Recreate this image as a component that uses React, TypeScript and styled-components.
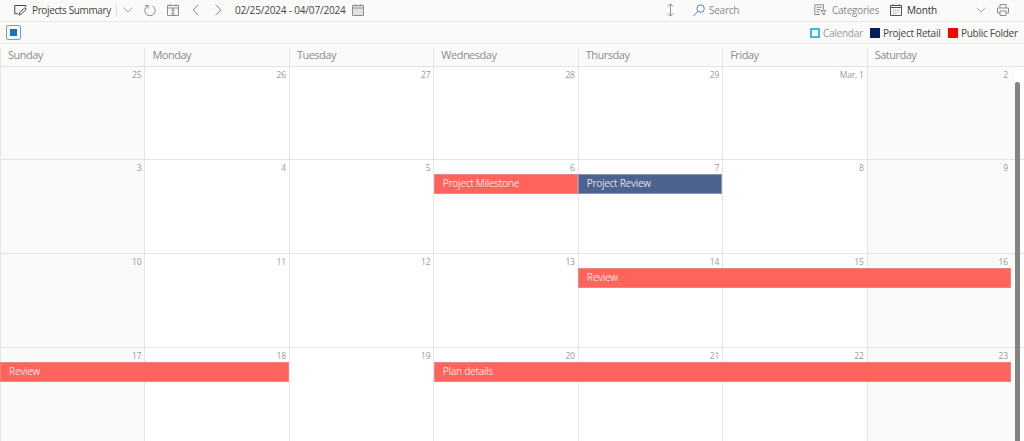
import type { ReactNode } from "react"
import styled, { createGlobalStyle } from "styled-components"

type EventItem = {
    title: string;
    start: number;
    span: number;
    color: string;
}

type WeekItem = {
    days: string[];
    events: EventItem[];
}

const RED = '#ff645c';
const NAVY = '#4d628f';

const dayNames = ['Sunday', 'Monday', 'Tuesday', 'Wednesday', 'Thursday', 'Friday', 'Saturday'];

const weeks: WeekItem[] = [
    { days: ['25', '26', '27', '28', '29', 'Mar, 1', '2'], events: [] },
    {
        days: ['3', '4', '5', '6', '7', '8', '9'],
        events: [
            { title: 'Project Milestone', start: 4, span: 1, color: RED },
            { title: 'Project Review', start: 5, span: 1, color: NAVY },
        ],
    },
    {
        days: ['10', '11', '12', '13', '14', '15', '16'],
        events: [{ title: 'Review', start: 5, span: 3, color: RED }],
    },
    {
        days: ['17', '18', '19', '20', '21', '22', '23'],
        events: [
            { title: 'Review', start: 1, span: 2, color: RED },
            { title: 'Plan details', start: 4, span: 4, color: RED },
        ],
    },
];

const legends = [
    { label: 'Calendar', color: '#35bde8', filled: false, width: 60 },
    { label: 'Project Retail', color: '#00205b', filled: true, width: 78 },
    { label: 'Public Folder', color: '#ff0000', filled: true, width: 70 },
];

type IconProps = { w: number; h: number; color?: string; children: ReactNode }

const Icon = ({ w, h, color = '#8c8c8c', children }: IconProps) => (
    <svg width={w} height={h} viewBox={`0 0 ${w} ${h}`} fill="none" stroke={color} strokeWidth="1">
        {children}
    </svg>
);

const Chevron = () => (
    <Icon w={10} h={6} color="#a5a5a5"><path d="M.8 .8 5 5 9.2 .8" /></Icon>
);

/**
 * Toolbar above the calendar
 */
const Toolbar = () => (
    <SToolbar>
        <SSlot w={18}>
            <Icon w={13} h={12} color="#444">
                <path d="M11.8 3.2V1.5H.8v8.2h3M5 11l.6-2.4 5.2-4.8 1.5 1.5L7.3 10z" />
            </Icon>
        </SSlot>
        <SSlot w={84}><SLabel spacing={-0.37} color="#444">Projects Summary</SLabel></SSlot>
        <SDivider />
        <SSlot w={21}><Chevron /></SSlot>
        <SSlot w={23}>
            <Icon w={12} h={13}>
                <path d="M3.6 1.9A5.2 5.2 0 1 0 8.4 1.9M1 1.6h3.2v3.2" />
            </Icon>
        </SSlot>
        <SSlot w={25}>
            <Icon w={12} h={12}>
                <path d="M.5 1.5h11v10H.5zM.5 4h11M3 0v2M9 0v2M6 4.8v5.6M4.3 6.3 6 4.7l1.7 1.6M4.3 9 6 10.6 7.7 9" />
            </Icon>
        </SSlot>
        <SSlot w={23}><Icon w={7} h={12}><path d="M6.4 .8 1 6l5.4 5.2" /></Icon></SSlot>
        <SSlot w={20}><Icon w={7} h={12}><path d="M.6 .8 6 6 .6 11.2" /></Icon></SSlot>
        <SSlot w={117}><SLabel spacing={-0.17} color="#444">02/25/2024 - 04/07/2024</SLabel></SSlot>
        <Icon w={12} h={12}>
            <path d="M.5 1.5h11v10H.5z" fill="#e2e2e2" />
            <path d="M.5 4h11M3 0v2M9 0v2" />
        </Icon>
        <SSpacer />
        <SSlot w={26}>
            <Icon w={7} h={14}><path d="M3.5 1v12M.8 3.6 3.5 .9l2.7 2.7M.8 10.4l2.7 2.7 2.7-2.7" /></Icon>
        </SSlot>
        <SSlot w={16}>
            <Icon w={12} h={13} color="#5585b5"><circle cx="7.6" cy="4.6" r="3.7" /><path d="M4.8 7.3.6 12" /></Icon>
        </SSlot>
        <SSlot w={105}><SLabel spacing={-0.25} color="#888">Search</SLabel></SSlot>
        <SSlot w={18}>
            <Icon w={13} h={12}>
                <path d="M6 10.5H.8V.8h8.7v4.7M2.5 3.3h5.3M2.5 5.6h4M2.5 7.9h3M7 6.5h5L10.2 8.7V11L8.8 10V8.7z" />
            </Icon>
        </SSlot>
        <SSlot w={58}><SLabel spacing={-0.25} color="#888">Categories</SLabel></SSlot>
        <SSlot w={17}>
            <Icon w={12} h={12} color="#555">
                <path d="M.5 1.5h11v10H.5zM.5 3.5h11M3 0v2M9 0v2" />
                <path d="M3 6h6.5M3 7.8h6.5M3 9.6h4" stroke="#aaa" strokeDasharray="1 .8" />
            </Icon>
        </SSlot>
        <SSlot w={69}><SLabel spacing={-0.15} color="#333">Month</SLabel></SSlot>
        <SSlot w={21}><Chevron /></SSlot>
        <Icon w={12} h={12}>
            <path d="M3 4V.5h6V4M3 9H.5V4h11v5H9M3 7h6v4.5H3z" />
        </Icon>
    </SToolbar>
);

const App = () => (
    <>
        <GlobalStyle />
        <SPage>
            <Toolbar />
            <SLegendBar>
                <SCheckbox />
                <SSpacer />
                {legends.map(({ label, color, filled, width }) => (
                    <SLegend key={label} w={width}>
                        <SSwatch color={color} filled={filled} />
                        <SLabel spacing={-0.27} color={filled ? '#444' : '#999'}>{label}</SLabel>
                    </SLegend>
                ))}
            </SLegendBar>
            <SDayHeader>
                {dayNames.map((name) => <SDayName key={name}>{name}</SDayName>)}
            </SDayHeader>
            <SCalendar>
                {weeks.map(({ days, events }) => (
                    <SWeek key={days[0]}>
                        {days.map((day, i) => (
                            <SDay key={day} col={i + 1} weekend={i === 0 || i === 6}>{day}</SDay>
                        ))}
                        {events.map(({ title, start, span, color }) => (
                            <SEvent key={title + start} start={start} span={span} color={color}>{title}</SEvent>
                        ))}
                    </SWeek>
                ))}
                <SScrollThumb />
            </SCalendar>
        </SPage>
    </>
);

const GlobalStyle = createGlobalStyle`
    * {
        box-sizing: border-box;
    }
    body {
        margin: 0;
        overflow: hidden;
        font-family: "Open Sans", "Noto Sans", sans-serif;
    }
    svg {
        display: block;
        flex-shrink: 0;
    }
`

const SPage = styled.div`
    display: flex;
    flex-direction: column;
    width: 1024px;
    height: 441px;
    overflow: hidden;
    background-color: #fafaf9;
`

const SToolbar = styled.div`
    display: flex;
    align-items: center;
    height: 22px;
    padding: 0 15px 1px 14px;
    border-bottom: 1px solid #e9e9e9;
`

const SSlot = styled.div<{ w: number }>`
    display: flex;
    align-items: center;
    flex: 0 0 ${({ w }) => w}px;
`

const SLabel = styled.span<{ spacing: number; color: string }>`
    color: ${({ color }) => color};
    font-size: 10px;
    line-height: 14px;
    letter-spacing: ${({ spacing }) => spacing}px;
    white-space: nowrap;
`

const SDivider = styled.div`
    width: 1px;
    height: 13px;
    margin-right: 6px;
    background-color: #ddd;
`

const SSpacer = styled.div`
    flex: 1;
`

const SLegendBar = styled.div`
    display: flex;
    align-items: center;
    height: 22px;
    padding: 0 6px;
    border-bottom: 1px solid #e9e9e9;
`

const SCheckbox = styled.div`
    width: 15px;
    height: 15px;
    border: 1px solid #62a4df;
    border-radius: 2px;
    background: #1474c9 content-box;
    padding: 3px;
`

const SLegend = styled.div<{ w: number }>`
    display: flex;
    align-items: center;
    gap: 3px;
    width: ${({ w }) => w}px;
`

const SSwatch = styled.div<{ color: string; filled: boolean }>`
    width: 10px;
    height: 10px;
    border: 2px solid ${({ color }) => color};
    background-color: ${({ color, filled }) => (filled ? color : 'white')};
`

const SDayHeader = styled.div`
    display: grid;
    grid-template-columns: repeat(7, 144.45px);
    height: 22.6px;
    padding-top: 4px;
    border-bottom: 1px solid #e4e4e4;
`

const SDayName = styled.div`
    padding-left: 7px;
    border-left: 1px solid #e4e4e4;
    color: #8c8c8c;
    font-size: 11px;
    line-height: 14px;
    letter-spacing: -0.5px;
    word-spacing: 0;
`

const SCalendar = styled.div`
    position: relative;
    flex: 1;
    overflow: hidden;
    background-color: white;
`

const SWeek = styled.div`
    display: grid;
    grid-template-columns: repeat(6, 144.45px) 148.3px;
    grid-template-rows: 14px 20px 1fr;
    height: 93.8px;
    border-bottom: 1px solid #e4e4e4;
`

const SDay = styled.div<{ col: number; weekend: boolean }>`
    grid-column: ${({ col }) => col};
    grid-row: 1 / -1;
    padding: 2px ${({ col }) => (col === 7 ? 7 : 3)}px 0 0;
    border-left: 1px solid #e4e4e4;
    background-color: ${({ weekend }) => (weekend ? '#fafaf9' : 'white')};
    color: #999;
    font-size: 8.5px;
    line-height: 11px;
    letter-spacing: -0.2px;
    text-align: right;
`

const SEvent = styled.div<{ start: number; span: number; color: string }>`
    grid-column: ${({ start, span }) => `${start} / span ${span}`};
    grid-row: 2;
    margin-right: ${({ start, span }) => (start + span > 7 ? 3.5 : 0)}px;
    margin-left: ${({ start }) => (start === 4 ? 0.5 : 0)}px;
    padding-left: 8px;
    border: 1px solid;
    border-color: ${({ color }) => (color === RED ? '#ec8680' : '#8296bd')};
    background-color: ${({ color }) => color};
    color: rgba(255, 255, 255, 0.82);
    font-size: 10px;
    line-height: 17px;
    letter-spacing: -0.28px;
`

const SScrollThumb = styled.div`
    position: absolute;
    top: 15px;
    right: 4px;
    bottom: -10px;
    width: 5px;
    border-radius: 2px;
    background-color: #838383;
`

export default App
